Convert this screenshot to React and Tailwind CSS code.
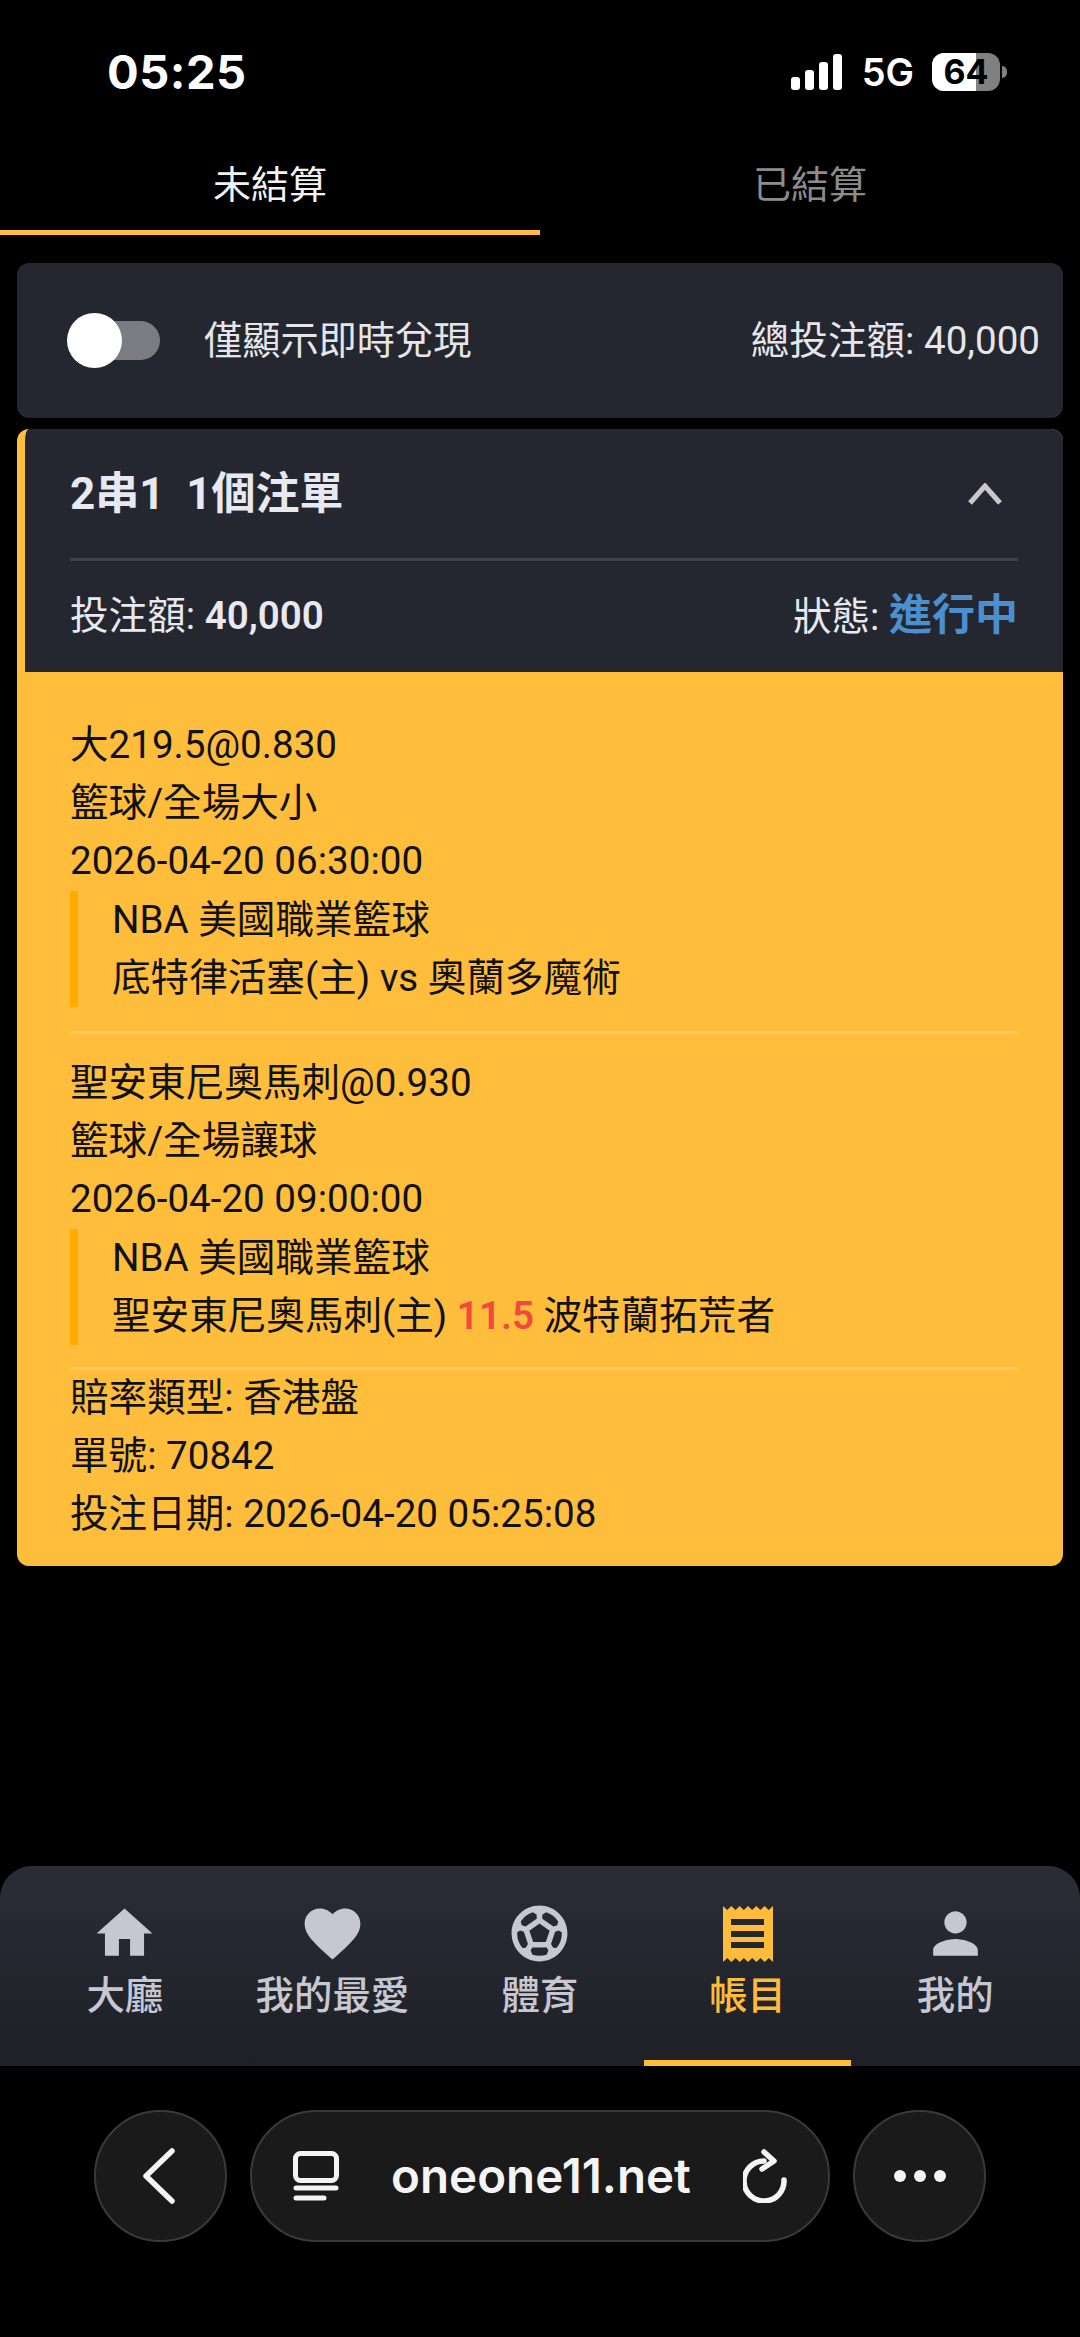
import { MdHome, MdFavorite, MdSportsSoccer, MdPerson } from "react-icons/md";

const ReceiptIcon = ({ className }) => (
  <svg viewBox="0 0 50 56" className={className} fill="currentColor">
    <path d="M0 0l4.2 4 4.1-4 4.2 4 4.1-4 4.2 4 4.2-4 4.1 4 4.2-4 4.1 4 4.2-4 4.1 4L50 0v56l-4.2-4-4.1 4-4.2-4-4.1 4-4.2-4-4.2 4-4.1-4-4.2 4-4.1-4-4.2 4-4.1-4L0 56z" />
    <path fill="#25272f" d="M8 13h33v6H8zM8 25h33v6H8zM8 36h33v6H8z" />
  </svg>
);

const navItems = [
  { label: "大廳", icon: MdHome },
  { label: "我的最愛", icon: MdFavorite },
  { label: "體育", icon: MdSportsSoccer },
  { label: "帳目", icon: ReceiptIcon, active: true },
  { label: "我的", icon: MdPerson },
];

const StatusBar = () => (
  <div className="flex h-[135px] items-start justify-between pl-[107px] pr-[73px] pt-[53px] font-['Inter',sans-serif] text-white">
    <span className="text-[47px] font-bold leading-[38px] tracking-[0.5px]">05:25</span>
    <div className="flex items-center">
      <div className="flex h-[36px] items-end gap-[5px]">
        <span className="h-[13px] w-[9px] rounded-[3px] bg-white" />
        <span className="h-[20px] w-[9px] rounded-[3px] bg-white" />
        <span className="h-[28px] w-[9px] rounded-[3px] bg-white" />
        <span className="h-[36px] w-[9px] rounded-[3px] bg-white" />
      </div>
      <span className="ml-[20px] mr-[18px] text-[38px] font-semibold leading-[38px]">5G</span>
      <div className="flex items-center gap-[2px]">
        <div className="relative flex h-[38px] w-[68px] rounded-[12px] bg-[#808080]">
          <span className="w-[44px] rounded-l-[12px] bg-white" />
          <span className="absolute inset-0 flex items-center justify-center text-[34px] font-bold leading-[38px] text-black">64</span>
        </div>
        <span className="h-[12px] w-[5px] rounded-r-full bg-[#808080]" />
      </div>
    </div>
  </div>
);

const Tabs = () => (
  <div className="flex h-[100px] text-center text-[38px]">
    <div className="flex-1 border-b-[5px] border-[#ffbc3a] pt-[27px] leading-[46px] text-[#f2f2f2]">未結算</div>
    <div className="flex-1 pt-[27px] leading-[46px] text-[#8c8c8c]">已結算</div>
  </div>
);

const FilterCard = () => (
  <div className="mx-[17px] mt-[28px] flex h-[155px] items-center justify-between rounded-[12px] bg-[#252730] pl-[50px] pr-[23px] text-[#e6e6ea]">
    <div className="flex items-center">
      <div className="flex items-center">
        <span className="z-10 h-[55px] w-[55px] rounded-full bg-white" />
        <span className="-ml-[30px] h-[39px] w-[68px] rounded-r-full bg-[#7b7c82]" />
      </div>
      <span className="ml-[44px] text-[38.2px] leading-[46px]">僅顯示即時兌現</span>
    </div>
    <span className="text-[38.6px] leading-[46px]">總投注額: 40,000</span>
  </div>
);

const Leg = ({ pick, market, time, league, teams }) => (
  <>
    <p>{pick}</p>
    <p>{market}</p>
    <p>{time}</p>
    <div className="mt-[1px] border-l-[8px] border-[#ffab00] pl-[34px]">
      <p>{league}</p>
      <p>{teams}</p>
    </div>
  </>
);

const BetCard = () => (
  <div className="mx-[17px] mt-[11px] overflow-hidden rounded-[12px] border-l-[8px] border-[#ffbd3c] bg-[#ffbd3c]">
    <div className="bg-[#252730] px-[45px] text-[#e8e8f0]">
      <div className="flex h-[132px] items-center justify-between border-b-[3px] border-[#3e404a]">
        <span className="text-[44px] font-bold leading-[50px]">2串1&nbsp;&nbsp;1個注單</span>
        <svg viewBox="0 0 34 22" className="mr-[16px] h-[22px] w-[34px] text-[#c8c8cc]" fill="none" stroke="currentColor" strokeWidth="5">
          <path d="M2 20L17 3l15 17" />
        </svg>
      </div>
      <div className="flex h-[111px] items-center justify-between pb-[2px]">
        <span className="text-[38.6px] leading-[46px]">投注額: <span className="font-semibold">40,000</span></span>
        <span className="text-[38.6px] leading-[46px]">狀態: <span className="text-[43px] font-bold text-[#4a8fd0]">進行中</span></span>
      </div>
    </div>
    <div className="-ml-[8px] pb-[23px] pl-[53px] pr-[45px] pt-[44px] text-[38.6px] leading-[58px] text-[#111111]">
      <Leg
        pick="大219.5@0.830"
        market="籃球/全場大小"
        time="2026-04-20 06:30:00"
        league="NBA 美國職業籃球"
        teams="底特律活塞(主) vs 奧蘭多魔術"
      />
      <div className="mb-[20px] mt-[24px] h-[3px] bg-[#ffc95e]" />
      <Leg
        pick="聖安東尼奧馬刺@0.930"
        market="籃球/全場讓球"
        time="2026-04-20 09:00:00"
        league="NBA 美國職業籃球"
        teams={
          <>
            聖安東尼奧馬刺(主) <span className="font-semibold text-[#f4473d]">11.5</span> 波特蘭拓荒者
          </>
        }
      />
      <div className="-mb-[1px] mt-[22px] h-[3px] bg-[#ffc95e]" />
      <p>賠率類型: 香港盤</p>
      <p>單號: 70842</p>
      <p>投注日期: 2026-04-20 05:25:08</p>
    </div>
  </div>
);

const BottomNav = () => (
  <div className="mt-auto flex h-[200px] rounded-t-[32px] bg-gradient-to-b from-[#2a2d36] to-[#1e2026] px-[21px]">
    {navItems.map(({ label, icon: Icon, active }) => (
      <div
        key={label}
        className={`flex flex-1 flex-col items-center pt-[34px] ${active ? "border-b-[6px] border-[#ffbc3a] text-[#ffbc3a]" : "text-[#c6c7d1]"}`}
      >
        <div className="flex h-[67px] w-[67px] items-center justify-center">
          {active ? <ReceiptIcon className="h-[56px] w-[50px]" /> : <Icon className="h-[67px] w-[67px]" />}
        </div>
        <span className="mt-[6px] text-[38.4px] font-medium leading-[46px]">{label}</span>
      </div>
    ))}
  </div>
);

const BrowserBar = () => (
  <div className="mb-[95px] mt-[44px] flex justify-center gap-[23px] text-[#f4f4f4]">
    <button className="flex h-[132px] w-[133px] items-center justify-center rounded-full border-[2px] border-[#3a3a3a] bg-[#1a1a1a]">
      <svg viewBox="0 0 34 56" className="mr-[6px] h-[56px] w-[34px]" fill="none" stroke="currentColor" strokeWidth="5.5" strokeLinecap="round" strokeLinejoin="round">
        <path d="M31 3L5 28l26 25" />
      </svg>
    </button>
    <div className="flex h-[132px] w-[580px] items-center rounded-full border-[2px] border-[#3a3a3a] bg-[#1a1a1a] pl-[41px] pr-[41px]">
      <svg viewBox="0 0 46 50" className="h-[50px] w-[46px]" fill="none" stroke="currentColor" strokeLinecap="round">
        <rect x="2.5" y="2.5" width="41" height="27" rx="5" strokeWidth="5" />
        <path d="M3 37h40M3 47h28" strokeWidth="5" />
      </svg>
      <span className="flex-1 text-center font-['Inter',sans-serif] text-[47.5px] font-semibold leading-[52px]">oneone11.net</span>
      <svg viewBox="0 0 44 54" className="h-[54px] w-[44px]" fill="none" stroke="currentColor" strokeWidth="5.5" strokeLinecap="round" strokeLinejoin="round">
        <path d="M21 12A20 20 0 1 0 41 31" />
        <path d="M21 3l10 9-12 8" />
      </svg>
    </div>
    <button className="flex h-[132px] w-[133px] items-center justify-center gap-[8px] rounded-full border-[2px] border-[#3a3a3a] bg-[#1a1a1a]">
      <span className="h-[12px] w-[12px] rounded-full bg-[#f4f4f4]" />
      <span className="h-[12px] w-[12px] rounded-full bg-[#f4f4f4]" />
      <span className="h-[12px] w-[12px] rounded-full bg-[#f4f4f4]" />
    </button>
  </div>
);

export default function App() {
  return (
    <div className="flex min-h-[2337px] flex-col bg-black font-['Roboto','Noto_Sans_CJK_TC',sans-serif]">
      <StatusBar />
      <Tabs />
      <FilterCard />
      <BetCard />
      <BottomNav />
      <BrowserBar />
    </div>
  );
}
